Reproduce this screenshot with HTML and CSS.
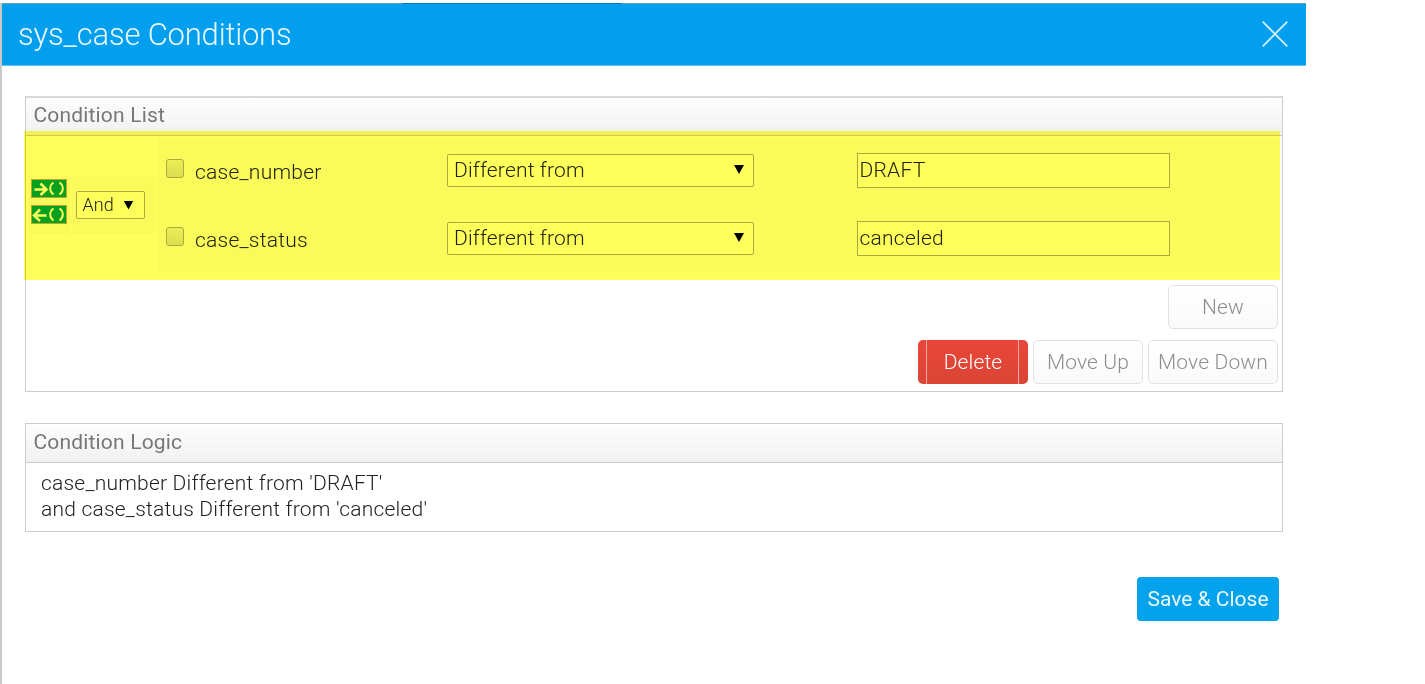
FILE: index.html
```html
<!DOCTYPE html>
<html lang="en">
<head>
<meta charset="utf-8">
<title>sys_case Conditions</title>
<link rel="stylesheet" href="styles.css">
</head>
<body>
<div class="dialog">
  <header class="titlebar">
    <h1 class="title">sys_case Conditions</h1>
    <svg class="close" viewBox="0 0 26 26"><path d="M.7.7 25.3 25.3M25.3.7.7 25.3"/></svg>
  </header>
  <main class="content">
    <section class="panel list">
      <h2 class="panel-head">Condition List</h2>
      <div class="conditions">
        <div class="group">
          <div class="cell parens">
            <svg class="paren" viewBox="0 0 36 19"><rect x=".5" y=".5" width="35" height="18"/><path d="M3.5 10.5h12M9.5 4.5l6 6-6 5.5"/><path class="thin" d="M22.5 3.5c-4.4 3-4.4 9 0 12M28.5 3.5c4.4 3 4.4 9 0 12"/></svg>
            <svg class="paren" viewBox="0 0 36 19"><rect x=".5" y=".5" width="35" height="18"/><path d="M15.5 10.5H3M9 4.5l-6 6 6 5.5"/><path class="thin" d="M22.5 3.5c-4.4 3-4.4 9 0 12M28.5 3.5c4.4 3 4.4 9 0 12"/></svg>
          </div>
          <div class="cell operator"><div class="select and"><span>And</span><i class="arrow"></i></div></div>
        </div>
        <div class="rows">
          <div class="row">
            <span class="check"></span><span class="field">case_number</span>
            <div class="select compare"><span>Different from</span><i class="arrow"></i></div>
            <div class="input">DRAFT</div>
          </div>
          <div class="row">
            <span class="check"></span><span class="field">case_status</span>
            <div class="select compare"><span>Different from</span><i class="arrow"></i></div>
            <div class="input">canceled</div>
          </div>
        </div>
      </div>
      <div class="actions first"><div class="btn">New</div></div>
      <div class="actions">
        <div class="btn delete">Delete</div>
        <div class="btn">Move Up</div>
        <div class="btn down">Move Down</div>
      </div>
      <div class="highlight"></div>
    </section>
    <section class="panel logic">
      <h2 class="panel-head">Condition Logic</h2>
      <div class="logic-text">case_number Different from 'DRAFT'<br>and case_status Different from 'canceled'</div>
    </section>
    <footer class="footer"><div class="save">Save &amp; Close</div></footer>
  </main>
</div>
</body>
</html>
```
FILE: styles.css
```css
* { box-sizing: border-box; }
body { margin: 0; background: #fff; font: 300 21px/26px Roboto, sans-serif; color: #222; overflow: hidden; }
.dialog { width: 1306px; height: 681px; margin-top: 3px; border-left: 2px solid #c9c9c9; }
.titlebar { height: 63px; background: linear-gradient(90deg, #65a4bd 400px, #0879b8 400px, #0879b8 620px, #65a4bd 620px) 0 0 / 100% 1px no-repeat, #029fee; border-bottom: 1px solid #5fc3f5; display: flex; justify-content: space-between; align-items: center; padding: 0 18px 0 15px; }
.title { margin: 2px 0 0 1px; font-size: 31px; line-height: 40px; font-weight: 300; letter-spacing: -.2px; color: #e9f7ff; white-space: nowrap; }
.close { width: 26px; height: 26px; fill: none; stroke: #d9f2ff; stroke-width: 1.7; }
.content { padding: 30px 23px 0; }
.panel { position: relative; width: 1258px; border: 1px solid #ccc; }
.list { height: 296px; border-top: 2px solid #d8d8d8; }
.logic { height: 109px; margin-top: 31px; }
.panel-head { margin: 0; height: 39px; padding-left: 7.5px; font-size: 21px; line-height: 36px; font-weight: 400; letter-spacing: .17px; color: #777; background: linear-gradient(#fdfdfd, #f1f1f1); border-bottom: 1px solid #ccc; white-space: nowrap; }
.list .panel-head { height: 38px; line-height: 34px; }
.conditions { display: flex; height: 144px; padding-top: 1px; }
.group { display: flex; width: 131px; gap: 2px; padding: 39px 0 0 2px; }
.cell { height: 58px; background: #fafafa; }
.parens { width: 42px; padding: 3px 0 0 3px; display: flex; flex-direction: column; gap: 7px; }
.paren { width: 36px; height: 19px; fill: none; stroke: #fff; stroke-width: 2.5; flex: none; }
.paren rect { fill: #07a055; stroke: #b5ab69; stroke-width: 1; }
.paren .thin { stroke-width: 1.9; }
.operator { width: 83px; padding: 15px 0 0 3.5px; }
.rows { display: flex; flex-direction: column; gap: 1px; flex: 1; }
.row { height: 67px; background: #fafafa; display: flex; align-items: flex-start; padding: 16px 0 0 9px; letter-spacing: .24px; }
.check { width: 18px; height: 19px; margin-top: 6px; border: 1px solid #aaa; border-radius: 3px; background: linear-gradient(#eee, #dcdcdc); }
.field { width: 252px; margin: 6px 0 0 11px; white-space: nowrap; }
.select { display: flex; align-items: center; justify-content: space-between; border: 1px solid #aaa; border-radius: 2px; background: #fff; white-space: nowrap; }
.compare { width: 307px; height: 33px; margin-top: 1px; padding: 0 9px 2px 6px; letter-spacing: .17px; }
.and { width: 69px; height: 28px; padding: 0 10px 0 6px; font-size: 18px; }
.arrow { width: 10px; height: 9px; background: #000; clip-path: polygon(0 0, 100% 0, 50% 100%); }
.input { width: 313px; height: 35px; margin-left: 102.5px; border: 1px solid #aaa; background: #fff; line-height: 32px; padding-left: 2px; white-space: nowrap; }
.highlight { position: absolute; left: -2px; top: 33px; width: 1256px; height: 149px; background: #ffff5c; mix-blend-mode: multiply; }
.actions { display: flex; justify-content: flex-end; gap: 5px; padding-right: 4px; margin-top: 11px; }
.actions.first { margin-top: 5px; }
.btn { width: 110px; height: 44px; border: 1.5px solid #e2e2e2; border-radius: 5px; background: linear-gradient(#fff, #fafafa); color: #8e8e8e; text-align: center; line-height: 42px; letter-spacing: .15px; white-space: nowrap; }
.down { width: 130px; }
.delete { color: #fff; border: 0; line-height: 45px; background: linear-gradient(90deg, transparent 8px, #f0aaa3 8px, #f0aaa3 9px, transparent 9px, transparent 100px, #f0aaa3 100px, #f0aaa3 101px, transparent 101px), linear-gradient(#e94639, #da4535); }
.logic-text { padding: 7px 0 0 15px; white-space: nowrap; letter-spacing: .21px; }
.footer { display: flex; justify-content: flex-end; padding: 45px 4px 0 0; }
.save { width: 142px; height: 44px; border-radius: 4px; background: #02a2ec; color: #e9f7ff; font-weight: 400; text-align: center; line-height: 44px; white-space: nowrap; }
```
